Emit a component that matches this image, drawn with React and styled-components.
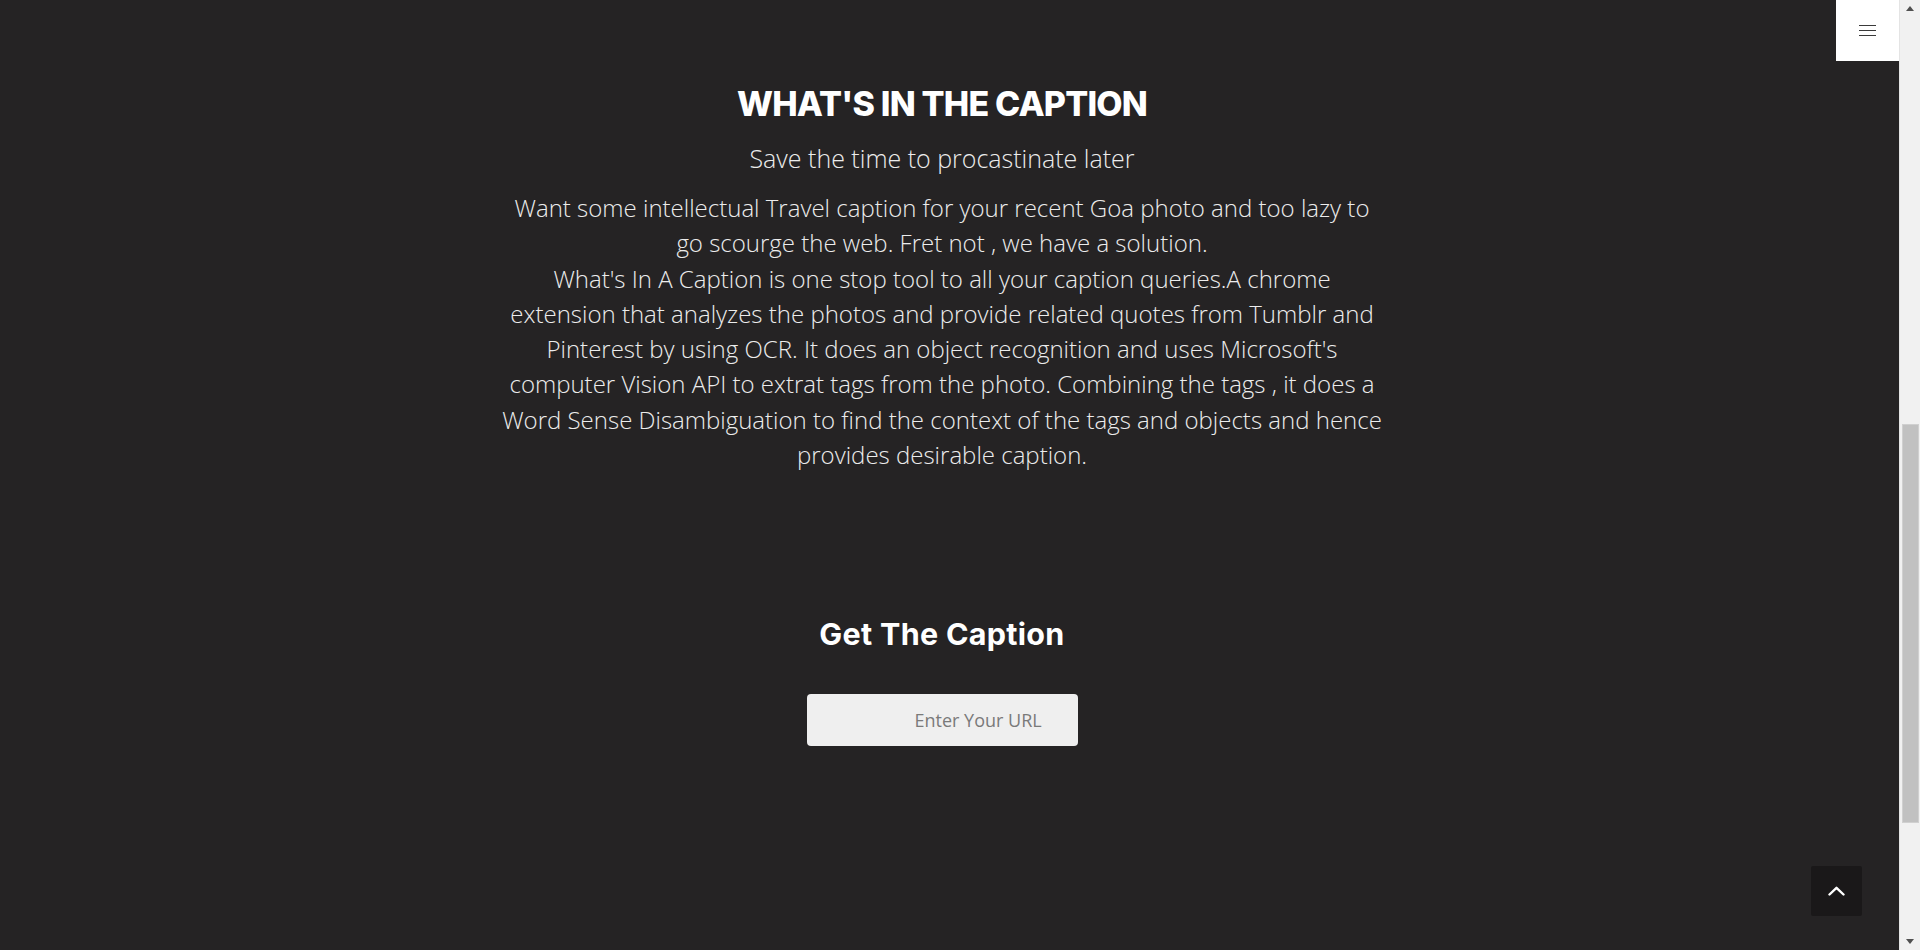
import React from 'react';
import styled, { createGlobalStyle } from 'styled-components';

const GlobalStyle = createGlobalStyle`
  html, body {
    margin: 0;
    padding: 0;
    overflow: hidden;
    background-color: #252324;
    font-family: 'Open Sans', 'Liberation Sans', sans-serif;
  }
  * {
    box-sizing: border-box;
  }
`;

const Page = styled.div`
  height: 950px;
  padding-right: 36px;
  display: flex;
  flex-direction: column;
  align-items: center;
`;

const AboutSection = styled.section`
  display: flex;
  flex-direction: column;
  align-items: center;
  padding-top: 83px;
  text-align: center;
`;

const Title = styled.h2`
  margin: 0;
  font-family: 'Inter', 'Liberation Sans', sans-serif;
  font-weight: 800;
  font-size: 34px;
  line-height: 42px;
  letter-spacing: -0.8px;
  text-transform: uppercase;
  color: #ffffff;
`;

const Subtitle = styled.p`
  margin: 16px 0 0;
  font-weight: 300;
  font-size: 25px;
  line-height: 34px;
  color: #ececec;
`;

const Description = styled.p`
  margin: 15px 0 0;
  max-width: 882px;
  font-weight: 300;
  font-size: 24px;
  line-height: 35.3px;
  color: #ececec;
`;

const CaptionSection = styled.section`
  display: flex;
  flex-direction: column;
  align-items: center;
  margin-top: 144px;
`;

const CaptionTitle = styled.h3`
  margin: 0;
  font-family: 'Inter', 'Liberation Sans', sans-serif;
  font-weight: 700;
  font-size: 30.5px;
  line-height: 36px;
  letter-spacing: 0.3px;
  color: #ffffff;
`;

const UrlInput = styled.input`
  margin-top: 42px;
  width: 271px;
  height: 52px;
  padding: 0 0 0 108px;
  border: none;
  border-radius: 4px;
  background-color: #efefef;
  font-family: 'Open Sans', 'Liberation Sans', sans-serif;
  font-size: 18px;
  color: #333;
  outline: none;

  &::placeholder {
    color: #7a7a7a;
  }
`;

const MenuToggle = styled.button`
  position: fixed;
  top: 0;
  right: 21px;
  width: 63px;
  height: 61px;
  border: none;
  background-color: #ffffff;
  display: flex;
  flex-direction: column;
  align-items: center;
  justify-content: center;
  gap: 3.5px;
  padding: 0;
  cursor: pointer;
`;

const MenuLine = styled.span`
  display: block;
  width: 17px;
  height: 1.5px;
  background-color: #3a3a3a;
`;

const BackToTop = styled.a`
  position: fixed;
  right: 58px;
  bottom: 34px;
  width: 51px;
  height: 50px;
  border-radius: 2px;
  background-color: #1a1819;
  display: flex;
  align-items: center;
  justify-content: center;
`;

const ScrollTrack = styled.div`
  position: fixed;
  top: 0;
  right: 0;
  width: 21px;
  height: 950px;
  background-color: #f1f1f1;
  border-left: 1px solid #e4e4e4;
  display: flex;
  flex-direction: column;
  align-items: center;
  justify-content: space-between;
`;

const ScrollArrow = styled.div`
  width: 0;
  height: 0;
  margin: ${(p) => (p.$down ? '0 0 6px' : '6px 0 0')};
  border-left: 4.5px solid transparent;
  border-right: 4.5px solid transparent;
  ${(p) => (p.$down ? 'border-top' : 'border-bottom')}: 5px solid #505050;
`;

const ScrollThumb = styled.div`
  width: 17px;
  height: 399px;
  margin-top: 413px;
  background-color: #c1c1c1;
  border: 1px solid #d0d0d0;
`;

const ScrollBody = styled.div`
  flex: 1;
  width: 100%;
  display: flex;
  justify-content: center;
`;

export default function App() {
  return (
    <>
      <GlobalStyle />
      <Page>
        <AboutSection>
          <Title>What's in the caption</Title>
          <Subtitle>Save the time to procastinate later</Subtitle>
          <Description>
            Want some intellectual Travel caption for your recent Goa photo and too lazy to go scourge the web. Fret not , we have a solution.
            <br />
            What's In A Caption is one stop tool to all your caption queries.A chrome extension that analyzes the photos and provide related quotes from Tumblr and Pinterest by using OCR. It does an object recognition and uses Microsoft's computer Vision API to extrat tags from the photo. Combining the tags , it does a Word Sense Disambiguation to find the context of the tags and objects and hence provides desirable caption.
          </Description>
        </AboutSection>
        <CaptionSection>
          <CaptionTitle>Get The Caption</CaptionTitle>
          <UrlInput type="text" placeholder="Enter Your URL" />
        </CaptionSection>
      </Page>

      <MenuToggle aria-label="menu">
        <MenuLine />
        <MenuLine />
        <MenuLine />
      </MenuToggle>

      <BackToTop href="#top" aria-label="back to top">
        <svg width="17" height="10" viewBox="0 0 17 10" fill="none">
          <path d="M1.5 8.5 L8.5 1.8 L15.5 8.5" stroke="#ffffff" strokeWidth="2.4" strokeLinecap="round" strokeLinejoin="round" />
        </svg>
      </BackToTop>

      <ScrollTrack>
        <ScrollArrow />
        <ScrollBody>
          <div>
            <ScrollThumb />
          </div>
        </ScrollBody>
        <ScrollArrow $down />
      </ScrollTrack>
    </>
  );
}
